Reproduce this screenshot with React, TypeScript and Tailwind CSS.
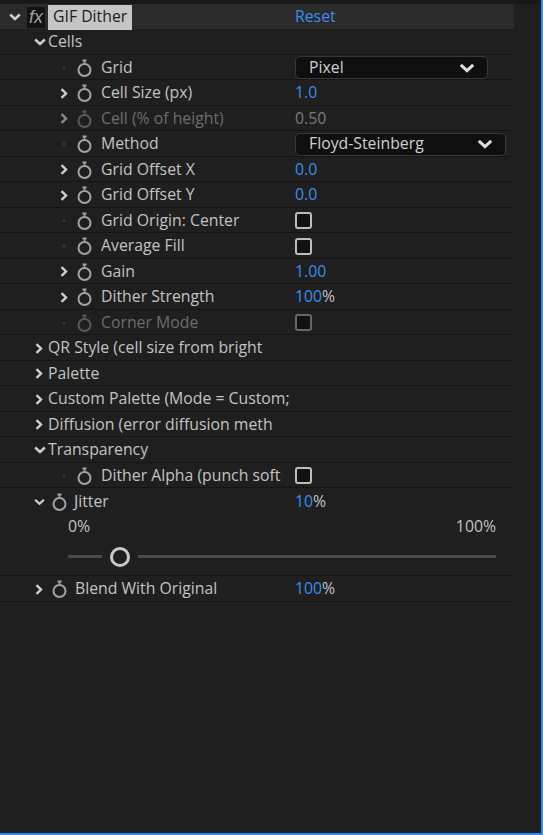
import { ReactNode } from "react";

const BLUE = "text-[#3a8ef0]";

// stopwatch (keyframe toggle) glyph
function Stopwatch({ dim = false }: { dim?: boolean }) {
  const c = dim ? "#5a5a5a" : "#a3a3a3";
  return (
    <svg width="15" height="18" viewBox="0 0 15 18" className="shrink-0">
      <rect x="5.5" y="0.5" width="4" height="2" fill={c} />
      <rect x="6.7" y="2" width="1.6" height="2.5" fill={c} />
      <circle cx="7.5" cy="11" r="6" fill="none" stroke={c} strokeWidth="2" />
    </svg>
  );
}

function ChevronRight({ dim = false }: { dim?: boolean }) {
  return (
    <svg width="8" height="11" viewBox="0 0 8 11" className="shrink-0">
      <path d="M1.5 1.2 L6 5.5 L1.5 9.8" fill="none" stroke={dim ? "#8a8a8a" : "#cfcfcf"} strokeWidth="2.4" />
    </svg>
  );
}

function ChevronDown({ w = 12 }: { w?: number }) {
  return (
    <svg width={w} height="8" viewBox="0 0 12 8" className="shrink-0">
      <path d="M1.2 1.5 L6 6 L10.8 1.5" fill="none" stroke="#cfcfcf" strokeWidth="2.4" />
    </svg>
  );
}

function Dot() {
  return <span className="block h-[2px] w-[2px] bg-[#3c3c3c]" />;
}

function Checkbox({ dim = false }: { dim?: boolean }) {
  return (
    <span
      className={`block h-[17px] w-[17px] rounded-[3px] border-[2.5px] bg-[#111111] ${
        dim ? "border-[#666666]" : "border-[#bdbdbd]"
      }`}
    />
  );
}

function Dropdown({ label, width }: { label: string; width: string }) {
  return (
    <div
      className={`flex h-[23px] ${width} items-center justify-between rounded-[5px] border border-[#383838] bg-[#0f0f0f] pl-[13px] pr-[12px] text-[#d0d0d0]`}
    >
      <span>{label}</span>
      <svg width="16" height="10" viewBox="0 0 16 10">
        <path d="M1.8 1.8 L8 7.6 L14.2 1.8" fill="none" stroke="#dcdcdc" strokeWidth="3" />
      </svg>
    </div>
  );
}

function Row({ children, value }: { children: ReactNode; value?: ReactNode }) {
  return (
    <div className="flex h-[25.5px] items-center border-b border-[#151515] pt-[2px]">
      <div className="flex w-[295px] shrink-0 items-center overflow-hidden whitespace-nowrap">{children}</div>
      <div className="flex items-center">{value}</div>
    </div>
  );
}

// a parameter row: expander slot, stopwatch, name
function Param({
  name,
  twirl,
  dim = false,
  value,
}: {
  name: string;
  twirl?: boolean;
  dim?: boolean;
  value?: ReactNode;
}) {
  return (
    <Row value={value}>
      <span className="ml-[58px] flex w-[12px] justify-center">{twirl ? <ChevronRight dim={dim} /> : <Dot />}</span>
      <span className="ml-[7px]">
        <Stopwatch dim={dim} />
      </span>
      <span className={`ml-[9px] ${dim ? "text-[#6c6c6c]" : ""}`}>{name}</span>
    </Row>
  );
}

function Group({ name, open = false }: { name: string; open?: boolean }) {
  return (
    <Row>
      <span className="ml-[34px] flex w-[14px] justify-start">
        {open ? <ChevronDown /> : <span className="ml-[1px]"><ChevronRight /></span>}
      </span>
      <span>{name}</span>
    </Row>
  );
}

export default function App() {
  return (
    <div
      className="flex h-[835px] w-[543px] flex-col overflow-hidden border-b-2 border-r-2 border-[#2e8bf2] bg-[#1f1f1f] text-[15.8px] text-[#c3c3c3]"
      style={{ fontFamily: "'Open Sans', Lato, sans-serif" }}
    >
      <div className="h-[4px] shrink-0 bg-[#181818]" />
      <div className="w-[514px]">
        {/* effect header */}
        <div className="flex h-[25px] items-center bg-[#2b2b2b] pt-[1px]">
          <div className="flex w-[295px] items-center">
            <span className="ml-[9px]">
              <ChevronDown />
            </span>
            <span
              className="ml-[6px] flex h-[21px] w-[18px] items-center justify-center bg-[#121212] text-[18px] italic text-[#a0a0a0]"
              style={{ fontFamily: "'Liberation Sans', sans-serif" }}
            >
              fx
            </span>
            <span className="ml-[3px] flex h-[25px] items-center bg-[#c6c6c6] px-[5px] text-[#1c1c1c]">GIF Dither</span>
          </div>
          <span className={BLUE}>Reset</span>
        </div>

        <Group name="Cells" open />
        <Param name="Grid" value={<Dropdown label="Pixel" width="w-[193px]" />} />
        <Param name="Cell Size (px)" twirl value={<span className={BLUE}>1.0</span>} />
        <Param name="Cell (% of height)" twirl dim value={<span className="text-[#7a7a7a]">0.50</span>} />
        <Param name="Method" value={<Dropdown label="Floyd-Steinberg" width="w-[211px]" />} />
        <Param name="Grid Offset X" twirl value={<span className={BLUE}>0.0</span>} />
        <Param name="Grid Offset Y" twirl value={<span className={BLUE}>0.0</span>} />
        <Param name="Grid Origin: Center" value={<Checkbox />} />
        <Param name="Average Fill" value={<Checkbox />} />
        <Param name="Gain" twirl value={<span className={BLUE}>1.00</span>} />
        <Param
          name="Dither Strength"
          twirl
          value={
            <span>
              <span className={BLUE}>100</span>%
            </span>
          }
        />
        <Param name="Corner Mode" dim value={<Checkbox dim />} />
        <Group name="QR Style (cell size from bright" />
        <Group name="Palette" />
        <Group name="Custom Palette (Mode = Custom;" />
        <Group name="Diffusion (error diffusion meth" />
        <Group name="Transparency" open />
        <Param name="Dither Alpha (punch soft" value={<Checkbox />} />

        {/* Jitter, expanded with its slider */}
        <div className="border-b border-[#151515]">
          <div className="flex h-[26px] items-center pt-[2px]">
            <div className="flex w-[295px] items-center">
              <span className="ml-[34px]">
                <ChevronDown w={11} />
              </span>
              <span className="ml-[7px]">
                <Stopwatch />
              </span>
              <span className="ml-[7px]">Jitter</span>
            </div>
            <span>
              <span className={BLUE}>10</span>%
            </span>
          </div>
          <div className="ml-[68px] mr-[18px] flex h-[24px] items-center justify-between pt-[1px]">
            <span>0%</span>
            <span>100%</span>
          </div>
          <div className="ml-[68px] mr-[18px] flex h-[37px] items-center">
            <span className="h-[3px] w-[34px] bg-[#4b4b4b]" />
            <span className="mx-[8px] h-[20px] w-[20px] shrink-0 rounded-full border-[3px] border-[#c9c9c9]" />
            <span className="h-[3px] flex-1 bg-[#4b4b4b]" />
          </div>
        </div>

        <Row
          value={
            <span>
              <span className={BLUE}>100</span>%
            </span>
          }
        >
          <span className="ml-[35px]">
            <ChevronRight />
          </span>
          <span className="ml-[9px]">
            <Stopwatch />
          </span>
          <span className="ml-[8px]">Blend With Original</span>
        </Row>
      </div>
    </div>
  );
}
